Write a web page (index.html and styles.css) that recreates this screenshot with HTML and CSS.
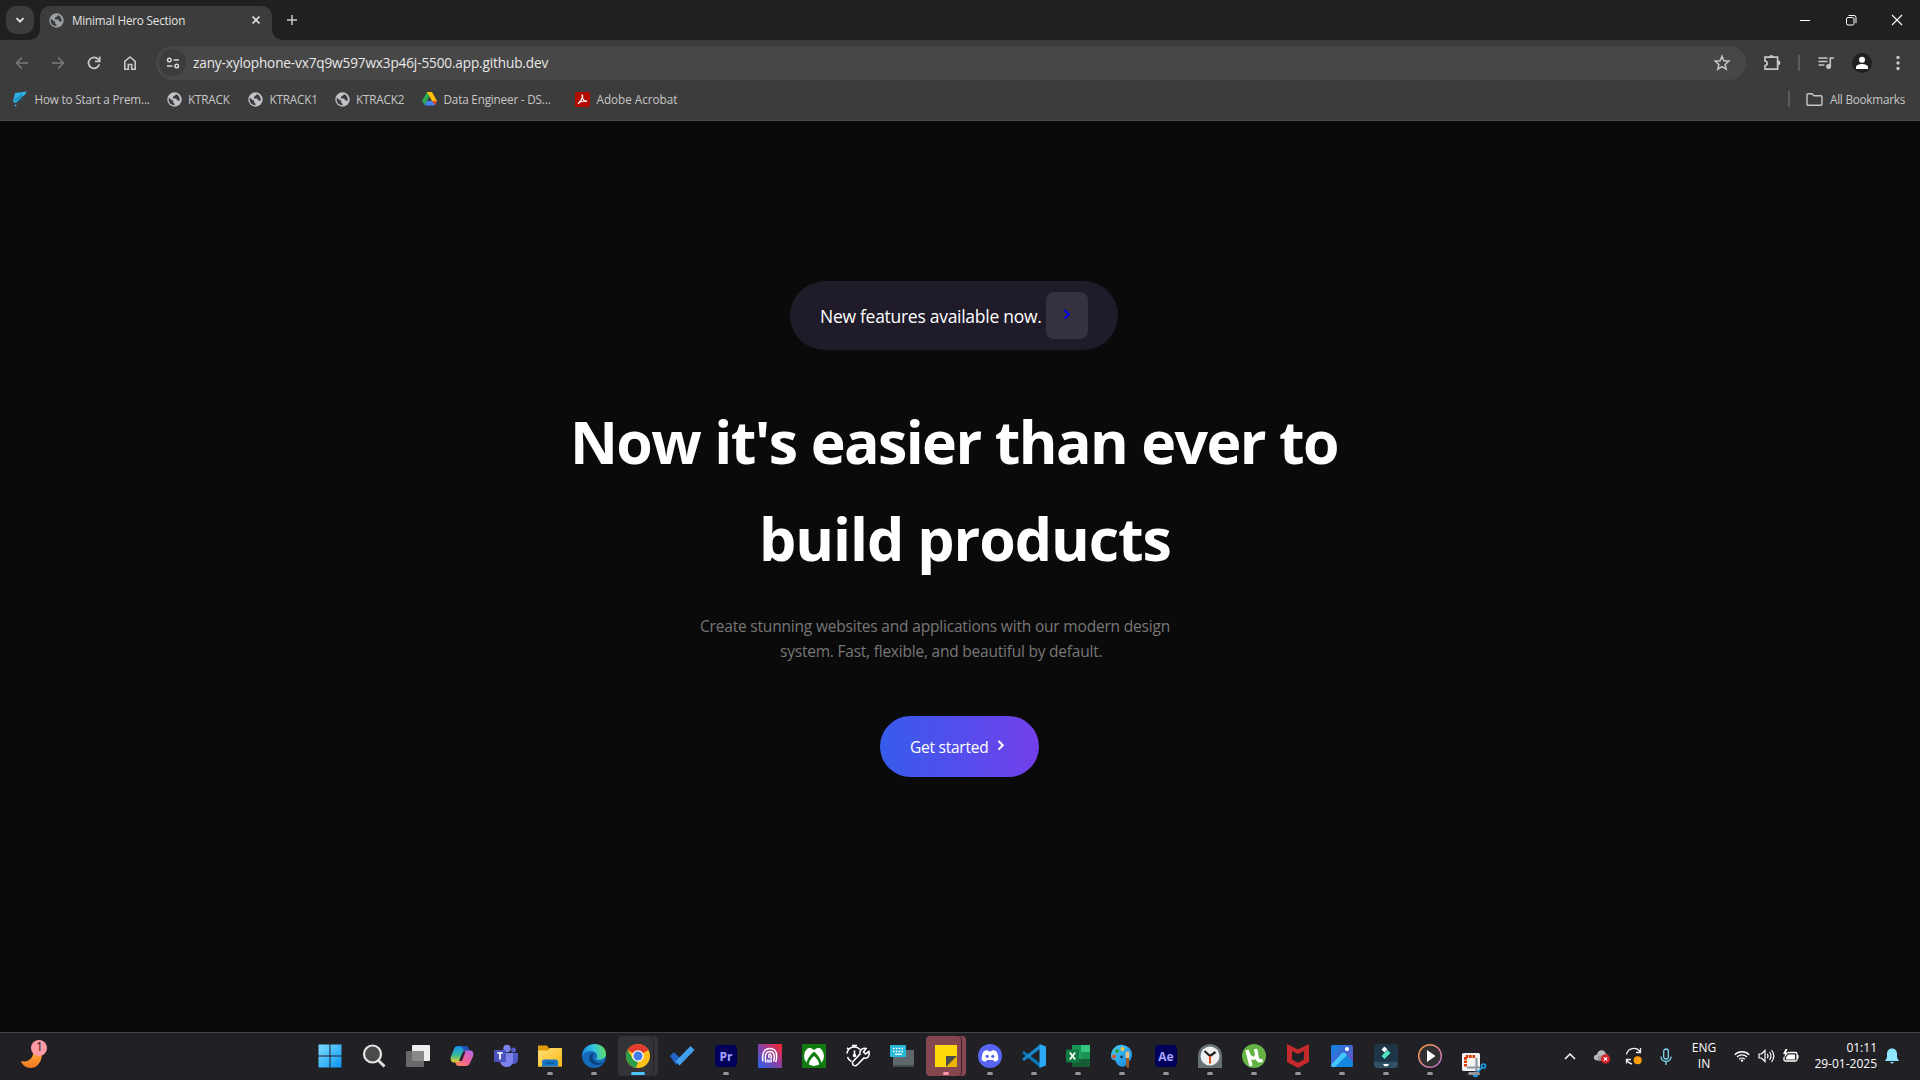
FILE: index.html
```html
<!DOCTYPE html>
<html lang="en">
<head>
<meta charset="utf-8">
<title>Minimal Hero Section</title>
<link rel="stylesheet" href="styles.css">
</head>
<body>
<svg width="0" height="0" class="defs">
  <defs>
    <symbol id="globe" viewBox="0 0 24 24"><circle cx="12" cy="12" r="11.5" fill="currentColor"/><path d="M3 9 L8 13 L10 14 V17 L12 18.500 V21 A9 9 0 0 1 3 9Z M14 3.300 C13.500 6 13 6 10.500 6.500 C10.500 9 9 8.500 9 10.500 H14 C16 10.500 15 13.500 17 13.500 L19.800 14.500 A9 9 0 0 0 14 3.300Z" fill="#3c3c3c"/></symbol>
    <linearGradient id="win" x1="0" y1="0" x2="1" y2="1"><stop offset="0" stop-color="#7ddcff"/><stop offset="1" stop-color="#0a95f5"/></linearGradient>
    <linearGradient id="blue" x1="0" y1="0" x2="1" y2="1"><stop offset="0" stop-color="#45d0f8"/><stop offset="1" stop-color="#1a82d6"/></linearGradient>
    <linearGradient id="cop" x1="0" y1="0" x2="0" y2="1"><stop offset="0" stop-color="#1691f0"/><stop offset=".55" stop-color="#35b99a"/><stop offset="1" stop-color="#f2cb22"/></linearGradient>
    <linearGradient id="cop2" x1="1" y1="0" x2="0" y2="1"><stop offset="0" stop-color="#b06af4"/><stop offset=".5" stop-color="#ee5f9b"/><stop offset="1" stop-color="#ff8a55"/></linearGradient>
    <linearGradient id="moon" x1="0" y1="0" x2="0" y2="1"><stop offset="0" stop-color="#ffb43c"/><stop offset="1" stop-color="#f07a22"/></linearGradient>
    <linearGradient id="finger" x1="0" y1="1" x2="1" y2="0"><stop offset="0" stop-color="#2864e8"/><stop offset=".5" stop-color="#8a3fa5"/><stop offset="1" stop-color="#ff2626"/></linearGradient>
    <linearGradient id="edge" x1="0" y1=".4" x2="1" y2=".3"><stop offset="0" stop-color="#1a8be0"/><stop offset=".5" stop-color="#36c6e0"/><stop offset="1" stop-color="#62dc58"/></linearGradient>
    <linearGradient id="yellow" x1="0" y1="0" x2="1" y2="1"><stop offset="0" stop-color="#ffe07a"/><stop offset="1" stop-color="#fbb813"/></linearGradient>
    <linearGradient id="photo" x1="0" y1="0" x2="1" y2="1"><stop offset="0" stop-color="#1187e8"/><stop offset="1" stop-color="#7548b8"/></linearGradient>
    <linearGradient id="ring" x1="0" y1="0" x2="1" y2="1"><stop offset="0" stop-color="#ff9e40"/><stop offset="1" stop-color="#b267d4"/></linearGradient>
  </defs>
</svg>
<header class="browser">
  <div class="tabstrip">
    <span class="tabsearch"><svg width="10" height="10" viewBox="0 0 10 10"><path d="M1.500 3.200 5 6.700 8.500 3.200" fill="none" stroke="#e3e3e3" stroke-width="1.800"/></svg></span>
    <div class="tab">
      <svg class="globe dim" width="15" height="15"><use href="#globe"/></svg>
      <span class="t-tab">Minimal Hero Section</span>
      <svg class="close" width="10" height="10" viewBox="0 0 10 10"><path d="M1.500 1.500l7 7m0-7-7 7" stroke="#e3e3e3" stroke-width="1.600"/></svg>
    </div>
    <svg class="plus" width="12" height="12" viewBox="0 0 12 12"><path d="M6 1v10M1 6h10" stroke="#c7c7c7" stroke-width="1.500"/></svg>
    <div class="winctl">
      <svg width="12" height="12" viewBox="0 0 12 12"><path d="M1 6.500h10" stroke="#fff"/></svg>
      <svg width="12" height="12" viewBox="0 0 12 12" fill="none" stroke="#fff"><rect x="1.500" y="3.500" width="7.500" height="7.500" rx="1.500"/><path d="M3.500 1.500h5.500a2 2 0 0 1 2 2V9"/></svg>
      <svg width="12" height="12" viewBox="0 0 12 12"><path d="M1 1l10 10m0-10L1 11" stroke="#fff" stroke-width="1.100"/></svg>
    </div>
  </div>
  <div class="toolbar">
    <div class="nav">
      <svg width="16" height="16" viewBox="0 0 16 16" fill="none" stroke="#7b7b7b" stroke-width="1.600"><path d="M14 8H3M8 2.500 2.500 8 8 13.500"/></svg>
      <svg width="16" height="16" viewBox="0 0 16 16" fill="none" stroke="#7b7b7b" stroke-width="1.600"><path d="M2 8h11M8 2.500 13.500 8 8 13.500"/></svg>
      <svg width="16" height="16" viewBox="0 0 16 16" fill="none" stroke="#c7c7c7" stroke-width="1.700"><path d="M13.300 9.300A5.500 5.500 0 1 1 12.200 4.300L13.600 6M13.700 1.500V6.300H9"/></svg>
      <svg width="16" height="16" viewBox="0 0 16 16" fill="none" stroke="#c7c7c7" stroke-width="1.600"><path d="M2.800 6.400 8 2l5.200 4.400v7.800H9.700V9.500H6.300v4.700H2.800z"/></svg>
    </div>
    <div class="omnibox">
      <span class="tune"><svg width="14" height="14" viewBox="0 0 14 14" fill="none" stroke="#d5d5d5" stroke-width="1.500"><circle cx="3.300" cy="4" r="1.800"/><path d="M7.500 4H13M1 10h5.500"/><circle cx="10.700" cy="10" r="1.800"/></svg></span>
      <span class="t-url">zany-xylophone-vx7q9w597wx3p46j-5500.app.github.dev</span>
      <svg class="star" width="18" height="18" viewBox="0 0 18 18" fill="none" stroke="#c7c7c7" stroke-width="1.500"><path d="M9 2.300l1.900 4.500 4.900.4-3.700 3.200 1.100 4.800L9 12.600l-4.200 2.600 1.100-4.800-3.700-3.200 4.900-.4z"/></svg>
    </div>
    <svg class="puzzle" width="18" height="18" viewBox="0 0 18 18" fill="none" stroke="#c7c7c7" stroke-width="1.700"><path d="M2 3.200h12.600v12H2v-3.500c3-.4 3-4.300 0-4.700z"/><path d="M6.800 2.800a1.600 1.600 0 0 1 3 0zM15 7.300a1.600 1.600 0 0 1 0 3.200z" fill="#c7c7c7"/></svg>
    <i class="vbar"></i>
    <svg class="media" width="18" height="16" viewBox="0 0 18 16" stroke="#c7c7c7" stroke-width="1.600" fill="none"><path d="M1.500 3h9M1.500 6.500h9M1.500 10h6M13.300 11.500V3h3.500"/><circle cx="11.600" cy="11.500" r="1.700" fill="#c7c7c7"/></svg>
    <span class="avatar"><svg width="14" height="14" viewBox="0 0 14 14" fill="#fff"><circle cx="7" cy="3.800" r="3"/><path d="M1 13v-1.600C1 9 4.500 8 7 8s6 1 6 3.400V13z"/></svg></span>
    <svg class="dots" width="4" height="16" viewBox="0 0 4 16" fill="#c7c7c7"><circle cx="2" cy="2.500" r="1.700"/><circle cx="2" cy="8" r="1.700"/><circle cx="2" cy="13.500" r="1.700"/></svg>
  </div>
  <nav class="bookmarks">
    <span class="bm b1"><svg width="16" height="17" viewBox="0 0 16 17"><path d="M3 2 15 .5C13.500 2.500 13 5 10 5.500 8.500 8 5.500 9 4.500 12L1 11z" fill="#2fb1e6"/><path d="M3 9 10 4M4.500 11 11 7" stroke="#0b6f9d" stroke-width="1"/><circle cx="3.500" cy="14.500" r="1" fill="#2fb1e6"/></svg><span>How to Start a Prem...</span></span>
    <span class="bm b2"><svg class="globe" width="15" height="15"><use href="#globe"/></svg><span>KTRACK</span></span>
    <span class="bm b3"><svg class="globe" width="15" height="15"><use href="#globe"/></svg><span>KTRACK1</span></span>
    <span class="bm b4"><svg class="globe" width="15" height="15"><use href="#globe"/></svg><span>KTRACK2</span></span>
    <span class="bm b5"><svg width="15" height="14" viewBox="0 0 15 14"><path d="M5 0h5L5.500 8 2.700 13 0 9z" fill="#2da94f"/><path d="M5 0h5l5 9H10z" fill="#ffc107"/><path d="M5 9h10l-2.500 4.500h-10z" fill="#4285f4"/><path d="M10 9h5l-2.300 4z" fill="#ea4335"/></svg><span>Data Engineer - DS...</span></span>
    <span class="bm b6"><svg width="15" height="15" viewBox="0 0 15 15"><rect width="15" height="15" rx="2" fill="#b30b00"/><path d="M7 3c1.500 0 .5 4-3.500 8.500C3 11 5 9 11.500 9 11 11 7 7.500 7 3z" fill="none" stroke="#fff" stroke-width="1.200"/></svg><span>Adobe Acrobat</span></span>
    <i class="vbar end"></i>
    <svg class="folder" width="17" height="13" viewBox="0 0 17 13" fill="none" stroke="#c7c7c7" stroke-width="1.400"><path d="M1 2q0-1.200 1.200-1.200H6l2 2h6.800Q16 2.800 16 4v7q0 1.200-1.200 1.200H2.200Q1 12.200 1 11z"/></svg>
    <span class="t-all">All Bookmarks</span>
  </nav>
</header>
<main class="hero">
  <div class="pill"><span class="t-pill">New features available now.</span><a class="go"><svg width="8" height="11" viewBox="0 0 8 11"><path d="M1.500 1l4.300 4.300L1.500 9.600" fill="none" stroke="#0000ee" stroke-width="2"/></svg></a></div>
  <h1><span class="h1a">Now it's easier than ever to</span><span class="h1b">build products</span></h1>
  <p class="lead"><span class="pa">Create stunning websites and applications with our modern design</span><span class="pb">system. Fast, flexible, and beautiful by default.</span></p>
  <a class="cta"><span class="t-cta">Get started</span><svg width="8" height="11" viewBox="0 0 8 11"><path d="M1.500 1l4.300 4.300L1.500 9.600" fill="none" stroke="#fff" stroke-width="2"/></svg></a>
</main>
<footer class="taskbar">
  <div class="weather"><svg width="30" height="32" viewBox="0 0 30 32"><path d="M3 22c8 2 14-4 12-13l7-1c5 10-1 21-9 21-5 0-9-3-10-7z" fill="url(#moon)"/><circle cx="21" cy="9" r="8" fill="#ff99a4"/></svg><span>1</span></div>
  <div class="apps">
    <span class="app"><svg viewBox="0 0 24 24"><path fill="url(#win)" d="M.5.5h11v11H.5zM12.500.5h11v11h-11zM.5 12.500h11v11H.5zM12.500 12.500h11v11h-11z"/></svg></span>
    <span class="app"><svg viewBox="0 0 24 24"><path d="M16.500 16.500 22.500 22.500" stroke="#ddd" stroke-width="3"/><circle cx="10.500" cy="10" r="8.500" fill="#4a4a4a" stroke="#e5e5e5" stroke-width="2.200"/></svg></span>
    <span class="app"><svg viewBox="0 0 24 24"><rect x="6" y="1" width="18" height="16" rx="1" fill="#eee"/><rect x="0" y="7" width="18" height="16" rx="1" fill="#777" opacity=".85"/></svg></span>
    <span class="app"><svg viewBox="0 0 24 24"><path d="M8 2h7c2 0 3 1 3.500 3l.5 2h-3c-2 0-2.500 1-3 3l-1.500 6c-.6 2-1.500 2.500-3 2.500H4c-3 0-4-3-3-6L4 5c.7-2 2-3 4-3z" fill="url(#cop)"/><path d="M9 2h6c2 0 3 1 3.500 3l.5 2h-5L12 3z" fill="#2152b8"/><path d="M16 22H9c-2 0-3-1-3.500-3l-.3-1H8c2 0 3-1 3.500-3L13 10c.6-2.500 1.500-3.500 4-3.500h3c3 0 4 2.500 3 6L20 19c-.7 2-2 3-4 3z" fill="url(#cop2)"/><path d="M13 7.500h2.500L12 17H9z" fill="#2a2030"/></svg></span>
    <span class="app"><svg viewBox="0 0 24 24"><circle cx="13" cy="4.500" r="3.700" fill="#7b83eb"/><circle cx="19.500" cy="6" r="2.500" fill="#5059c9"/><path d="M15 9h9v6c0 6-7 6-8 3z" fill="#5059c9"/><path d="M6 9h13v8c0 8-12 8-13 0z" fill="#7b83eb"/><rect y="6" width="12" height="12" rx="1" fill="#4b53bc"/><path d="M3.300 9h5.400M6 9v6.500" stroke="#fff" stroke-width="1.700"/></svg></span>
    <span class="app on"><svg viewBox="0 0 24 24"><path d="M0 1.500h9l2 3H24V22.500H0z" fill="#e29b0b"/><path d="M0 6.500h10L12 4H24v18.500H0z" fill="url(#yellow)"/><path d="M4 22.500V18q0-2.500 2.500-2.500h11Q20 15.500 20 18v4.500z" fill="#1477c9"/><path d="M7.500 19h9" stroke="#0b4f8e" stroke-width="1.300"/></svg></span>
    <span class="app on"><svg viewBox="0 0 24 24"><circle cx="12" cy="12" r="12" fill="#1469b8"/><path d="M0 12C1-4 24-3.500 24 10c0 5-7 7-10 5 3-3 0-8-5-8S1 10 0 12z" fill="url(#edge)"/><path d="M8 11c-3 7 5 13 13.500 8-4 .5-11 0-11-6 0-2 1-3 2-3-2-1-4 0-4.500 1z" fill="#0d3f78"/></svg></span>
    <span class="app active stack"><svg viewBox="0 0 24 24"><circle cx="12" cy="12" r="12" fill="#fbc116"/><path d="M12 12 1.600 6A12 12 0 0 1 22.400 6z" fill="#e33b2e"/><path d="M1.600 6l5.500 9.500L12 18l-2 5.800A12 12 0 0 1 1.600 6z" fill="#2b9c48"/><circle cx="12" cy="12" r="5.800" fill="#fff"/><circle cx="12" cy="12" r="4.500" fill="#3f7de8"/></svg></span>
    <span class="app"><svg viewBox="0 0 24 24"><path d="M0 12l4-4 6 6-4 7z" fill="#2064c4"/><path d="M5.500 17.500 20.500 2l4 4L9.500 21.500z" fill="#42a1ee"/></svg></span>
    <span class="app on adobe"><b>Pr</b></span>
    <span class="app"><svg viewBox="0 0 24 24"><rect width="24" height="24" fill="url(#finger)"/><path d="M5 17.500c-1.500-8 1-13 7-13s7 5 6.500 10q0 2-1 3.500M8 18.500c-1.500-7-.5-11 4-11s5 5 3.500 10M11 14c-.5-3 0-4 1-4s1.500 2 1 5" fill="none" stroke="#fff" stroke-width="1.500"/><path d="M9 15.500h5v3H9z" fill="#cdd6ff"/></svg></span>
    <span class="app"><svg viewBox="0 0 24 24"><rect width="24" height="24" rx="1" fill="#107c10"/><circle cx="12" cy="12" r="10" fill="#fff"/><path d="M5 4c3-1 5 .5 7 2 2-1.500 4-3 7-2-2-3-12-3-14 0zM4.500 19.500C5 15 8.500 10.500 12 7.500c3.500 3 7 7.500 7.500 12l-2 2C17 17 14.500 14 12 12c-2.500 2-5 5-5.500 9.500z" fill="#107c10"/></svg></span>
    <span class="app"><svg viewBox="0 0 24 24" fill="none" stroke="#fff" stroke-width="1.600"><path d="M6 1.500h5M8.500 1.500v2M1 4l2 1.500M1 9.500a7.500 7.500 0 0 1 13-4M1.500 13a7.500 7.500 0 0 0 4 4.500M8.500 6.500v5"/><circle cx="8.500" cy="11.500" r="1"/><path d="M23 7.500 19.500 10 17.500 8l2.500-3.500c-4-1-7 2-6 5.500L7.500 17c-3 3 1 6.500 4 3.500L18 14c4 1 6-2.500 5-6.500z"/></svg></span>
    <span class="app"><svg viewBox="0 0 24 24"><rect x="3" y="6" width="21" height="17" rx="1" fill="#60676c"/><path d="M3 21h21v2H3z" fill="#444a4e"/><rect y="1" width="16" height="12" rx="1" fill="#29b9d6"/><path d="M3 4.500h10.500M3 7.500h10.500" stroke="#fff" stroke-width="1.500" stroke-dasharray="1.600 1.200"/><path d="M5 10.300h7" stroke="#fff" stroke-width="1.300"/></svg></span>
    <span class="app sticky stack"><svg viewBox="0 0 24 24"><path d="M1 1h22v11L12 23H1z" fill="#ffd90a"/><path d="M12 12h11L12 23z" fill="#4b4b4b"/><path d="M23 12v11H12z" fill="#e8b500"/></svg></span>
    <span class="app on"><svg viewBox="0 0 24 24"><circle cx="12" cy="12" r="12" fill="#5865f2"/><path d="M5.500 7.500c2-1.500 3.500-1.500 4.500-1l.5.800h3l.5-.8c1-.5 2.500-.5 4.500 1 1.500 3 2 6 1.700 8.500-1.500 1.200-3 1.500-4 1.500l-1-1.500h-6.400l-1 1.500c-1 0-2.500-.3-4-1.500-.3-2.500.2-5.500 1.700-8.500z" fill="#fff"/><circle cx="9.200" cy="12.300" r="1.600" fill="#5865f2"/><circle cx="14.800" cy="12.300" r="1.600" fill="#5865f2"/></svg></span>
    <span class="app on"><svg viewBox="0 0 24 24"><path d="M0 9l2-2 16 12v4.500z" fill="#0877b9"/><path d="M0 15l2 2L18 5V.5z" fill="#1688cc"/><path d="M17.500 0 24 2.500v19L17.500 24z" fill="#2aaaf2"/></svg></span>
    <span class="app on"><svg viewBox="0 0 24 24"><rect x="6" y="1" width="18" height="22" rx="1" fill="#21a366"/><path d="M6 1h9v7H6zM15 8h9v7h-9z" fill="#189553"/><path d="M15 1h9v7h-9z" fill="#33c481"/><path d="M6 15h18v8H6z" fill="#155c35"/><rect y="5.500" width="13" height="13" rx="1" fill="#107c41"/><path d="M3.800 8.500l5.400 7m0-7-5.400 7" stroke="#fff" stroke-width="1.700"/></svg></span>
    <span class="app on"><svg viewBox="0 0 24 24"><path d="M1 12C1 5 7 0 13 1c8 1 11 9 8 14-1 3-3 2-4 4-.5 4-5 5-9 2-3-3-1-4-4-5-2-.5-3-1-3-4z" fill="url(#blue)"/><circle cx="12.500" cy="5" r="1.900" fill="#ffc83d"/><circle cx="7" cy="7" r="1.900" fill="#33a02c"/><circle cx="4" cy="12.500" r="1.900" fill="#e74f20"/><circle cx="11.500" cy="13" r="1.400" fill="#123d5c"/><path d="M15.500 9c0-2 4-2 4 0l-.5 5h-3z" fill="#eec18c"/><path d="M16 14h3v9.500h-2.500z" fill="#a55a20"/></svg></span>
    <span class="app on adobe"><b>Ae</b></span>
    <span class="app on"><svg viewBox="0 0 24 24"><path d="M0 12a12 12 0 0 1 24 0v12H0z" fill="#687178"/><circle cx="12" cy="12" r="9.500" fill="#eee"/><path d="M6.500 7 12 12l5.500-4" fill="none" stroke="#222" stroke-width="2.200"/><path d="M12 12v7.500" stroke="#df4d1d" stroke-width="2"/></svg></span>
    <span class="app on"><svg viewBox="0 0 24 24"><circle cx="12" cy="12" r="12" fill="#65b345"/><path d="M5 6l4 16M6 8c1 7 9 9 8.500 1.500L13.500 5M14.500 10c.5 6 2 8 6 6" fill="none" stroke="#fff" stroke-width="3.400"/></svg></span>
    <span class="app on"><svg viewBox="0 0 24 24"><path d="M1 0l11 5.500L23 0v18l-11 6L1 18zM6 7v8.500l6 3.300 6-3.300V7l-6 3z" fill="#c42a2b" fill-rule="evenodd"/></svg></span>
    <span class="app on"><svg viewBox="0 0 24 24"><rect x="1" y="1" width="22" height="22" rx="2" fill="url(#photo)"/><path d="M1 21 12 9q1.500-1 3 0l8 9v3q0 2-2 2H3q-2 0-2-2z" fill="#1187e0"/><path d="M1 21 12 9q1.500-1 3 0l2 2L5 23H3q-2 0-2-2z" fill="#46c6fa"/><circle cx="17" cy="5" r="2" fill="#fff"/></svg></span>
    <span class="app on"><svg viewBox="0 0 24 24"><rect width="24" height="24" rx="4" fill="#1d3546"/><path d="M0 18h24v2q0 4-4 4H4q-4 0-4-4z" fill="#315064"/><path d="M10.500 2.500l3 3-3 3-3-3z" fill="#fff"/><path d="M7.500 12l6-6 3 3-6 6z" fill="#4fe3c1"/><path d="M9 20h6l-1.500 2.200h-3z" fill="#fff"/></svg></span>
    <span class="app on"><svg viewBox="0 0 24 24"><circle cx="12" cy="12" r="11.300" fill="#303033" stroke="url(#ring)" stroke-width="1.500"/><path d="M9 6v12l8.500-6z" fill="#fff"/></svg></span>
    <span class="app on snip"><svg viewBox="0 0 24 24"><rect x="0" y="0" width="18" height="18" rx="1.500" fill="#f4f4f4"/><path d="M3.500 13.500V3.500h10" fill="none" stroke="#d83b01" stroke-width="3" stroke-dasharray="2.600 .8"/><path d="M14.500 5v13M5 14.500h13" stroke="#8f989f" stroke-width="2.200"/><g fill="none" stroke="#1a9fe8" stroke-width="1.700"><circle cx="21.500" cy="13" r="2"/><circle cx="13.500" cy="21.300" r="2"/><path d="M15 20l5-5.500"/></g></svg></span>
  </div>
  <div class="tray">
    <svg class="caret" width="12" height="8" viewBox="0 0 12 8"><path d="M1 7l5-5 5 5" fill="none" stroke="#fff" stroke-width="1.500"/></svg>
    <svg class="cloud" width="18" height="16" viewBox="0 0 18 16"><path d="M4 12.500C-.5 12 0 7 4 6.500 5 1 12 1 13 6c4 1 3 6.500 0 6.500z" fill="#bbb"/><path d="M5 12.500c-2-3 1-6 4-5l4-1c4 1 3 6 0 6z" fill="#999"/><circle cx="12.500" cy="11" r="4.700" fill="#d6232d"/><path d="M10.800 9.300l3.400 3.400m0-3.400-3.400 3.400" stroke="#fff" stroke-width="1.200"/></svg>
    <svg class="sync" width="18" height="18" viewBox="0 0 18 18" fill="none" stroke="#eee" stroke-width="1.300"><path d="M1.500 7.500a7.500 7.500 0 0 1 13.500-3M15.500 1v4.500H11M1.500 16.500v-4H6M2 13a7 7 0 0 0 5 4"/><circle cx="12.700" cy="13.300" r="4" fill="#ff9d0a" stroke="none"/></svg>
    <svg class="mic" width="12" height="17" viewBox="0 0 12 17" fill="none" stroke="#7fd8f0" stroke-width="1.300"><rect x="3.700" y="1" width="4.600" height="10" rx="2.300"/><path d="M1 8.500c0 6.500 10 6.500 10 0M6 13.500V17"/></svg>
    <span class="lang"><span>ENG</span><span>IN</span></span>
    <svg class="wifi" width="16" height="12" viewBox="0 0 16 12" fill="none" stroke="#fff" stroke-width="1.300"><path d="M.8 4.800a10 10 0 0 1 14.400 0M3 7a7 7 0 0 1 10 0M5.200 9.200a4 4 0 0 1 5.600 0"/><circle cx="8" cy="10.600" r="1.200" fill="#fff" stroke="none"/></svg>
    <svg class="vol" width="17" height="14" viewBox="0 0 17 14" fill="none" stroke="#fff" stroke-width="1.200"><path d="M1 5v4h2.500L7 12.500v-11L3.500 5zM9.200 4.800q1.700 2.200 0 4.400M11.500 3q3 4 0 8M13.500 1q4.600 6 0 12"/></svg>
    <svg class="bat" width="17" height="14" viewBox="0 0 17 14"><path d="M6 3.500h7.500q1.500 0 1.500 1.500v5.500q0 1.500-1.500 1.500h-10Q2 12 2 10.500V8" fill="none" stroke="#fff" stroke-width="1.300"/><path d="M15 6h1.500v3.500H15zM6 5.500h7v5H4V8.500z" fill="#fff"/><path d="M3.500 0 1 5h2.200L2 9l4.300-5.500H4L5.500 0z" fill="#fff"/></svg>
    <span class="clock"><span>01:11</span><span>29-01-2025</span></span>
    <svg class="bell" width="14" height="16" viewBox="0 0 14 16" fill="#8fe6ff"><path d="M7 .5c3.500 0 5 2.500 5 5.500v3.500l2 3.500H0l2-3.500V6C2 3 3.500.5 7 .5zM5 14h4q-2 3-4 0z"/></svg>
  </div>
</footer>
</body>
</html>
```
FILE: styles.css
```css
* { box-sizing: border-box; }
body { margin: 0; width: 1920px; height: 1080px; overflow: hidden; background: #0a0a0a; font-family: "Open Sans", "Noto Sans", sans-serif; color: #fff; display: flex; flex-direction: column; }
svg { display: block; flex: none; }
.defs { position: absolute; }
span, a { white-space: nowrap; }

/* browser chrome */
.browser { height: 121px; flex: none; background: #3c3c3c; border-bottom: 1px solid #4a4a4a; }
.tabstrip { height: 40px; background: #1f2120; display: flex; align-items: flex-start; padding: 6px 0 0 6px; }
.tabsearch { width: 28px; height: 28px; border-radius: 10px; background: #3c3c3c; display: grid; place-items: center; margin-right: 6px; }
.tab { width: 232px; height: 34px; background: #3c3c3c; border-radius: 10px 10px 0 0; display: flex; align-items: center; padding: 0 11px 6px 9px; position: relative; }
.tab::before, .tab::after { content: ""; position: absolute; bottom: 0; width: 10px; height: 10px; }
.tab::before { left: -10px; background: radial-gradient(circle at 0 0, transparent 9.5px, #3c3c3c 10px); }
.tab::after { right: -10px; background: radial-gradient(circle at 100% 0, transparent 9.5px, #3c3c3c 10px); }
.tab .t-tab { margin-left: 8px; font-size: 11.7px; letter-spacing: -.18px; color: #e3e3e3; }
.tab .close { margin-left: auto; }
.globe { color: #c0c3c8; }
.globe.dim { color: #9aa0a6; }
.plus { margin: 8px 0 0 14px; }
.winctl { margin-left: auto; display: flex; gap: 34px; padding: 8px 17px 0 0; }
.toolbar { height: 45px; display: flex; align-items: center; padding: 0 20px 0 14px; }
.nav { display: flex; gap: 20px; margin-right: 18px; flex: none; }
.omnibox { width: 1590px; height: 34px; flex: none; border-radius: 17px; background: #474747; display: flex; align-items: center; padding: 0 15px 0 3px; }
.tune { width: 27px; height: 27px; border-radius: 50%; background: #3c3c3c; display: grid; place-items: center; margin-right: 7px; }
.t-url { font-size: 13.6px; letter-spacing: -.14px; color: #e8e8e8; }
.star { margin-left: auto; }
.puzzle { margin-left: 17px; }
.vbar { width: 2px; height: 16px; flex: none; background: #5c5c5c; margin-left: 17px; }
.media { margin-left: 17px; }
.avatar { width: 20px; height: 20px; flex: none; border-radius: 50%; background: #1f2120; display: grid; place-items: center; margin-left: 17px; }
.dots { margin-left: 24px; }
.bookmarks { height: 28px; display: flex; align-items: center; font-size: 11.7px; letter-spacing: -.17px; color: #c7c7c7; padding: 0 15px 0 12px; }
.bm { display: flex; align-items: center; gap: 6.5px; flex: none; }
.b1 { width: 154.5px; }
.b2 { width: 81.5px; }
.b3 { width: 86.5px; }
.b4 { width: 87.5px; }
.b5 { width: 153px; }
.b6 { letter-spacing: 0; }
.bookmarks .end { margin-left: auto; }
.folder { margin: 0 7px 0 16px; }
.t-all { letter-spacing: -.22px; }

/* hero */
.hero { flex: 1; display: flex; flex-direction: column; align-items: flex-start; }
.pill { margin: 160px 0 0 790px; width: 328px; height: 69px; border-radius: 35px; background: #1f1b29; display: flex; align-items: center; padding-left: 30px; }
.t-pill { width: 226px; font-size: 17.5px; letter-spacing: -.28px; }
.go { width: 42px; height: 47px; border-radius: 8px; background: #35313e; display: grid; place-items: center; padding-bottom: 2px; }
h1 { margin: 43px 0 0; font-size: 59px; line-height: 97px; font-weight: 700; }
h1 span, .lead span { display: block; width: max-content; }
.h1a { margin-left: 570px; letter-spacing: -1.6px; word-spacing: .4px; }
.h1b { margin-left: 759px; letter-spacing: -1.05px; word-spacing: -.3px; }
.lead { margin: 27px 0 0; font-size: 15.5px; line-height: 25px; letter-spacing: -.19px; color: #777; }
.pa { margin-left: 700px; }
.pb { margin-left: 780px; letter-spacing: -.22px; }
.cta { margin: 52px 0 0 880px; width: 159px; height: 61px; border-radius: 31px; background: linear-gradient(90deg, #365ceb, #723feb); display: flex; align-items: center; padding-left: 30px; font-size: 15.5px; letter-spacing: -.24px; }
.cta svg { margin: -3px 0 0 9px; }

/* taskbar */
.taskbar { height: 48px; flex: none; background: #212024; border-top: 1px solid #424144; display: flex; }
.weather { width: 307px; flex: none; position: relative; padding: 6px 0 0 18px; }
.weather span { position: absolute; left: 36px; top: 6px; font-size: 12px; line-height: 16px; color: #222; }
.apps { display: flex; margin-left: 1px; }
.app { width: 44px; height: 47px; padding: 11px 10px 0; position: relative; }
.app svg { width: 24px; height: 24px; position: relative; overflow: visible; }
.app.on::after, .app.active::after, .sticky::after { content: ""; position: absolute; left: 19px; top: 39px; width: 6px; height: 3px; border-radius: 2px; background: #96969a; }
.app.active::after { left: 15px; width: 14px; background: #4cc2ff; }
.app.sticky::after { background: #ff99a4; }
.app.snip::after { left: 16px; width: 12px; }
.app.stack::before { content: ""; position: absolute; left: 2px; top: 3px; width: 35px; height: 40px; border-radius: 4px; background: #343337; box-shadow: 1px 0 #222125, 5px 0 #343337; }
.app.sticky::before { background: #85474f; box-shadow: 1px 0 #33252b, 5px 0 #85474f; }
.adobe b { display: grid; place-items: center; width: 22px; height: 22px; margin: 1px; border-radius: 4px; background: #00005b; color: #a9a5ff; font-size: 12px; }
.snip svg { top: 9px; }
.tray { margin-left: auto; display: flex; align-items: center; font-size: 12px; padding: 0 21px 1px 0; }
.cloud { margin-left: 17px; }
.sync { margin-left: 14px; }
.mic { margin-left: 17px; }
.lang { width: 30px; margin-left: 17px; }
.wifi { margin-left: 15px; }
.vol { margin-left: 8px; }
.bat { margin-left: 7px; }
.lang, .clock { display: flex; flex-direction: column; line-height: 16px; align-items: center; }
.clock { align-items: flex-end; margin-left: 16px; width: 62px; }
.bell { margin-left: 8px; }
```
